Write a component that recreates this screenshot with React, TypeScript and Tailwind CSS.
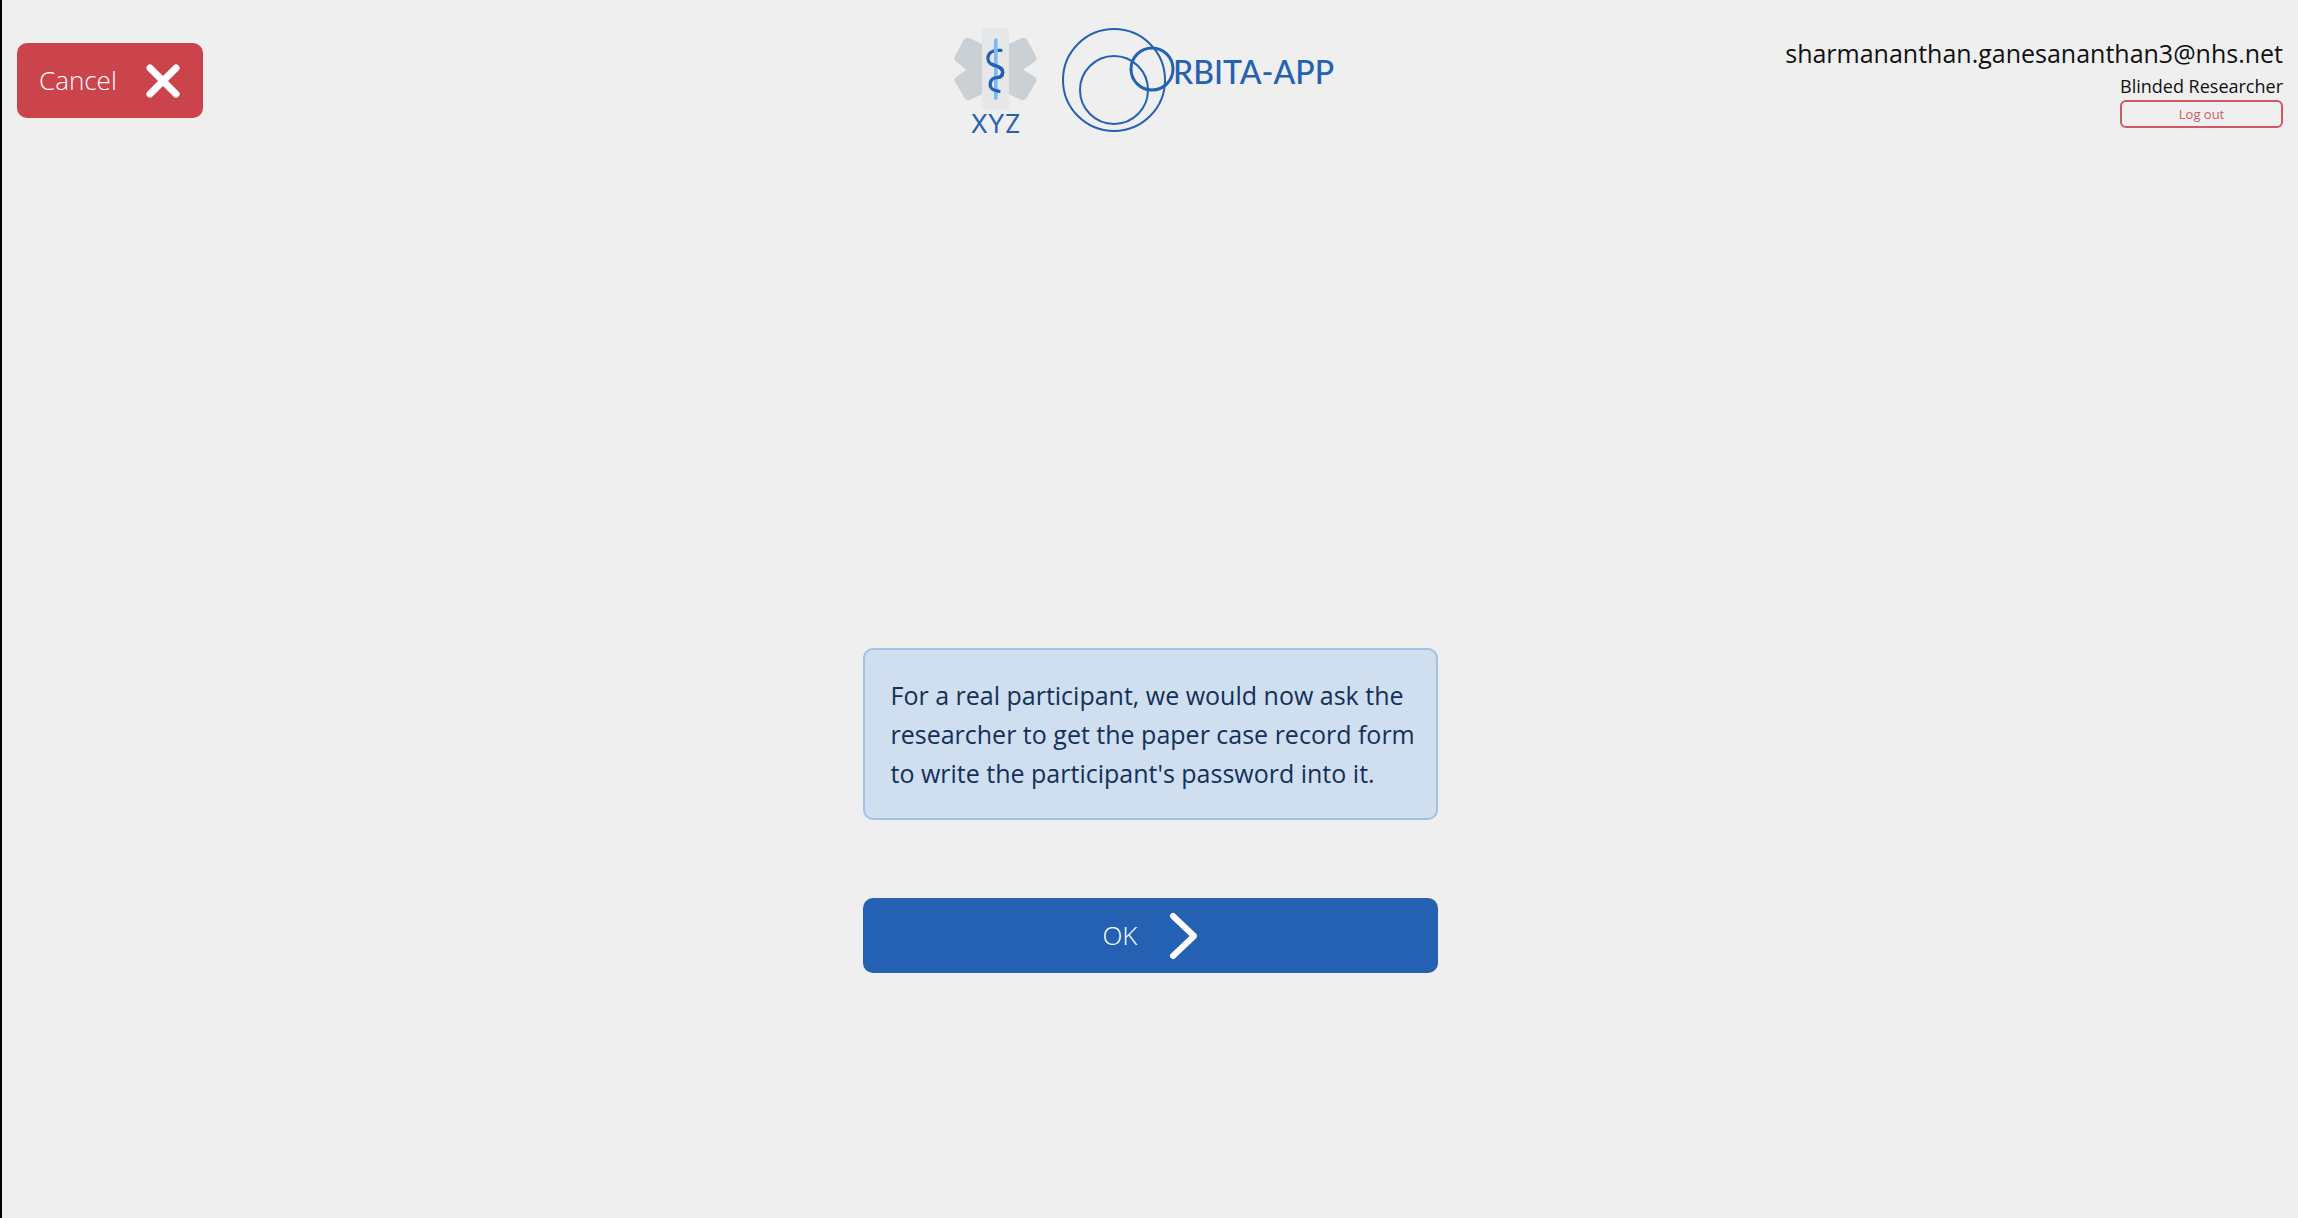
import React from "react";

function StarOfLife() {
  return (
    <svg viewBox="70 55 249 246" className="h-[82px] w-[83px]" aria-hidden="true">
      <rect x="154" y="55" width="81" height="245" rx="9" fill="#e6e7e9" />
      <path
        d="M99 91Q106 80 118 86L154 103V254L119 270Q108 275 101 264L73 216Q68 207 77 201L107 180L77 156Q68 150 73 140Z"
        fill="#cbd0d5"
      />
      <path
        d="M290 91Q283 80 271 86L235 103V254L270 270Q281 275 288 264L316 216Q321 207 312 201L277 180L312 156Q321 150 316 140Z"
        fill="#cbd0d5"
      />
      <path
        d="M211 122H202C166 122 164 158 186 165L200 170C224 178 219 203 199 204"
        fill="none"
        stroke="#2461b2"
        strokeWidth="10"
        strokeLinecap="round"
      />
      <rect x="190" y="86" width="11" height="185" rx="5" fill="#7db8f7" />
      <path
        d="M186 165L200 170C224 178 219 203 199 204C174 205 173 235 190 241L205 245"
        fill="none"
        stroke="#2461b2"
        strokeWidth="10"
        strokeLinecap="round"
      />
    </svg>
  );
}

function OrbitaLogo() {
  return (
    <svg viewBox="0 0 284 106" className="h-[106px] w-[284px]" role="img" aria-label="ORBITA-APP">
      <g fill="none" stroke="#2461b2">
        <circle cx="52" cy="52" r="51" strokeWidth="2" />
        <circle cx="52" cy="62" r="34" strokeWidth="2" />
        <circle cx="90" cy="41" r="21" strokeWidth="3" />
      </g>
      <text x="111" y="56" fill="#2461b2" className="[font-family:Lato,sans-serif] text-[32px] font-medium">
        RBITA-APP
      </text>
    </svg>
  );
}

export default function App() {
  return (
    <div className="min-h-screen border-l-2 border-black bg-[#efefef] [font-family:'Open_Sans',sans-serif] text-[25px] text-[#111]">
      <header className="grid grid-cols-[1fr_auto_1fr] items-start px-[15px] pt-7">
        <button
          type="button"
          className="mt-[15px] flex h-[75px] items-center gap-7 justify-self-start rounded-[10px] bg-[#cc444b] px-[22px] text-[26px] font-light text-white"
        >
          Cancel
          <svg viewBox="0 0 36 36" className="size-9" aria-hidden="true">
            <path d="M5 5L31 31M31 5L5 31" stroke="#fff" strokeWidth="7" strokeLinecap="round" />
          </svg>
        </button>

        <div className="flex items-start gap-[25px]">
          <div className="flex w-[83px] flex-col items-center">
            <StarOfLife />
            <span className="[font-family:Inter,sans-serif] text-[25px] leading-7 text-[#2461b2]">XYZ</span>
          </div>
          <OrbitaLogo />
        </div>

        <div className="flex flex-col items-end pt-[7px]">
          <span className="leading-9">sharmananthan.ganesananthan3@nhs.net</span>
          <div className="flex flex-col">
            <span className="pt-px text-[18px] leading-7">Blinded Researcher</span>
            <button
              type="button"
              className="h-7 rounded-[6px] border-2 border-[#cc5a62] text-[13px] leading-4 text-[#cc5a62]"
            >
              Log out
            </button>
          </div>
        </div>
      </header>

      <main className="mx-auto mt-[510px] flex w-full max-w-[575px] flex-col gap-[78px]">
        <p className="rounded-[10px] border-2 border-[#a3c1e2] bg-[#cfdfef] px-[26px] pt-[26px] pb-[25px] leading-[39px] whitespace-nowrap text-[#14305a]">
          For a real participant, we would now ask the
          <br />
          researcher to get the paper case record form
          <br />
          to write the participant's password into it.
        </p>
        <button
          type="button"
          className="flex h-[75px] items-center justify-center gap-7 rounded-[10px] bg-[#2461b2] text-[26px] font-light text-white"
        >
          OK
          <svg viewBox="0 0 32 50" className="h-[50px] w-8" aria-hidden="true">
            <path d="M8 5L29 25L8 45" fill="none" stroke="#fff" strokeWidth="6" strokeLinecap="round" strokeLinejoin="round" />
          </svg>
        </button>
      </main>
    </div>
  );
}
